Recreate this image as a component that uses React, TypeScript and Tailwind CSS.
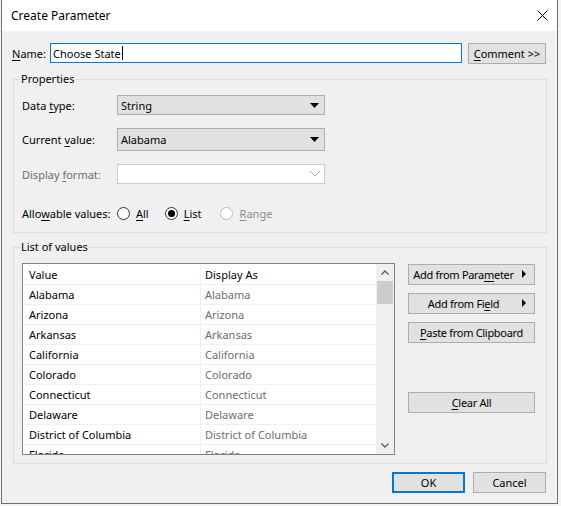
import React from "react";

const states = [
  "Alabama",
  "Arizona",
  "Arkansas",
  "California",
  "Colorado",
  "Connecticut",
  "Delaware",
  "District of Columbia",
  "Florida",
];

function SolidArrow() {
  return (
    <svg width="9" height="5" viewBox="0 0 9 5" className="shrink-0">
      <path d="M0 0 H9 L4.5 5 Z" fill="#000" />
    </svg>
  );
}

function RightArrow() {
  return (
    <svg width="4" height="8" viewBox="0 0 4 8" className="shrink-0">
      <path d="M0 0 L4 4 L0 8 Z" fill="#000" />
    </svg>
  );
}

function Radio({ checked, disabled }: { checked?: boolean; disabled?: boolean }) {
  return (
    <span
      className={
        "flex items-center justify-center w-[13px] h-[13px] rounded-full border bg-white shrink-0 " +
        (disabled ? "border-[#bcbcbc]" : "border-[#333333]")
      }
    >
      {checked && <span className="w-[7px] h-[7px] rounded-full bg-[#000]" />}
    </span>
  );
}

function Btn({
  children,
  className = "",
  primary,
}: {
  children: React.ReactNode;
  className?: string;
  primary?: boolean;
}) {
  return (
    <div
      className={
        "flex items-center justify-center bg-[#e1e1e1] text-black whitespace-nowrap " +
        (primary ? "border-2 border-[#0078d7] " : "border border-[#adadad] ") +
        className
      }
    >
      {children}
    </div>
  );
}

export default function App() {
  return (
    <div className="w-[561px] h-[506px] bg-[#f3f3f3] font-['Noto_Sans',sans-serif] text-[11px] leading-[15px] text-black whitespace-nowrap">
      <div className="ml-[1px] w-[557px] h-[504px] border-x border-b border-[#707070] bg-[#f0f0f0] flex flex-col">
        {/* Title bar */}
        <div className="h-[31px] bg-white flex items-center justify-between pl-[9px] pr-[8px]">
          <span className="text-[12px]">Create Parameter</span>
          <svg width="11" height="11" viewBox="0 0 11 11" className="mr-[1px]">
            <path d="M0.5 0.5 L10.5 10.5 M10.5 0.5 L0.5 10.5" stroke="#000" strokeWidth="1" />
          </svg>
        </div>

        {/* Name row */}
        <div className="mt-[12px] flex items-start pl-[10px]">
          <span className="w-[38px] h-[20px] flex items-center">
            <span>
              <u className="underline-offset-2">N</u>ame:
            </span>
          </span>
          <div className="w-[412px] h-[20px] border border-[#0078d7] bg-white flex items-center pl-[2px]">
            <span>Choose State</span>
            <span className="w-[1px] h-[14px] bg-black ml-[1px]" />
          </div>
          <Btn className="ml-[6px] w-[78px] h-[21px]">
            <span>
              <u className="underline-offset-2">C</u>omment &gt;&gt;
            </span>
          </Btn>
        </div>

        {/* Properties group */}
        <div className="relative mt-[15px] ml-[11px] w-[534px] h-[154px] border border-[#dcdcdc] pl-[8px] flex flex-col">
          <span className="absolute left-[6px] top-[-9px] px-[1px] bg-[#f0f0f0]">Properties</span>

          <div className="mt-[15px] flex items-center h-[20px]">
            <span className="w-[95px]">
              Data <u className="underline-offset-2">t</u>ype:
            </span>
            <div className="w-[208px] h-[20px] bg-[#e1e1e1] border border-[#adadad] flex items-center justify-between pl-[3px] pr-[5px]">
              <span>String</span>
              <SolidArrow />
            </div>
          </div>

          <div className="mt-[13px] flex items-center h-[23px]">
            <span className="w-[95px]">
              Current <u className="underline-offset-2">v</u>alue:
            </span>
            <div className="w-[208px] h-[23px] bg-[#e1e1e1] border border-[#adadad] flex items-center justify-between pl-[3px] pr-[5px]">
              <span>Alabama</span>
              <SolidArrow />
            </div>
          </div>

          <div className="mt-[13px] flex items-center h-[20px]">
            <span className="w-[95px] text-[#6d6d6d]">
              Display <u className="underline-offset-2">f</u>ormat:
            </span>
            <div className="w-[208px] h-[20px] bg-white border border-[#cccccc] flex items-center justify-end pr-[4px]">
              <svg width="10" height="6" viewBox="0 0 10 6">
                <path d="M0.5 0.5 L5 5 L9.5 0.5" stroke="#a0a0a0" strokeWidth="1" fill="none" />
              </svg>
            </div>
          </div>

          <div className="mt-[19px] flex items-center h-[20px]">
            <span className="w-[95px]">
              Allo<u className="underline-offset-2">w</u>able values:
            </span>
            <Radio />
            <span className="ml-[6px]">
              <u className="underline-offset-2">A</u>ll
            </span>
            <span className="ml-[16px]">
              <Radio checked />
            </span>
            <span className="ml-[6px]">
              <u className="underline-offset-2">L</u>ist
            </span>
            <span className="ml-[18px]">
              <Radio disabled />
            </span>
            <span className="ml-[7px] text-[#8d8d8d]">
              <u className="underline-offset-2">R</u>ange
            </span>
          </div>
        </div>

        {/* List of values group */}
        <div className="relative mt-[14px] ml-[11px] w-[534px] h-[217px] border border-[#dcdcdc] pl-[8px] flex items-start">
          <span className="absolute left-[6px] top-[-9px] px-[1px] bg-[#f0f0f0]">List of values</span>

          <div className="mt-[15px] w-[373px] h-[192px] border border-[#828282] bg-white flex overflow-hidden">
            <div className="flex flex-col w-[353px]">
              <div className="flex h-[21px] shrink-0 border-b border-[#f0f0f0]">
                <div className="w-[178px] border-r border-[#f0f0f0] pl-[6px] flex items-center">Value</div>
                <div className="w-[175px] pl-[4px] flex items-center">Display As</div>
              </div>
              {states.map((s) => (
                <div key={s} className="flex h-[20px] shrink-0 border-b border-[#f0f0f0]">
                  <div className="w-[178px] border-r border-[#f0f0f0] pl-[6px] flex items-center">{s}</div>
                  <div className="w-[175px] pl-[4px] flex items-center text-[#6d6d6d]">{s}</div>
                </div>
              ))}
            </div>
            <div className="w-[18px] h-full bg-[#f0f0f0] flex flex-col items-center">
              <div className="h-[17px] flex items-center justify-center">
                <svg width="8" height="5" viewBox="0 0 8 5">
                  <path d="M0.5 4.5 L4 1 L7.5 4.5" stroke="#606060" strokeWidth="1.4" fill="none" />
                </svg>
              </div>
              <div className="w-[16px] h-[23px] bg-[#cdcdcd]" />
              <div className="flex-1" />
              <div className="h-[17px] flex items-center justify-center">
                <svg width="8" height="5" viewBox="0 0 8 5">
                  <path d="M0.5 0.5 L4 4 L7.5 0.5" stroke="#606060" strokeWidth="1.4" fill="none" />
                </svg>
              </div>
            </div>
          </div>

          <div className="ml-[13px] mt-[16px] w-[127px] flex flex-col tracking-[-0.3px]">
            <Btn className="h-[21px] relative">
              <span className="mr-[16px]">
                Add from Para<u className="underline-offset-2">m</u>eter
              </span>
              <span className="absolute right-[8px] top-[5px] flex">
                <RightArrow />
              </span>
            </Btn>
            <Btn className="mt-[8px] h-[21px] relative">
              <span className="mr-[16px]">
                Add from Fi<u className="underline-offset-2">e</u>ld
              </span>
              <span className="absolute right-[8px] top-[5px] flex">
                <RightArrow />
              </span>
            </Btn>
            <Btn className="mt-[8px] h-[21px]">
              <span>
                <u className="underline-offset-2">P</u>aste from Clipboard
              </span>
            </Btn>
            <Btn className="mt-[49px] h-[21px]">
              <span>
                <u className="underline-offset-2">C</u>lear All
              </span>
            </Btn>
          </div>
        </div>

        {/* Bottom buttons */}
        <div className="mt-[8px] flex justify-end pr-[11px] gap-[8px]">
          <Btn primary className="w-[73px] h-[21px]">
            OK
          </Btn>
          <Btn className="w-[73px] h-[21px]">Cancel</Btn>
        </div>
      </div>
    </div>
  );
}
